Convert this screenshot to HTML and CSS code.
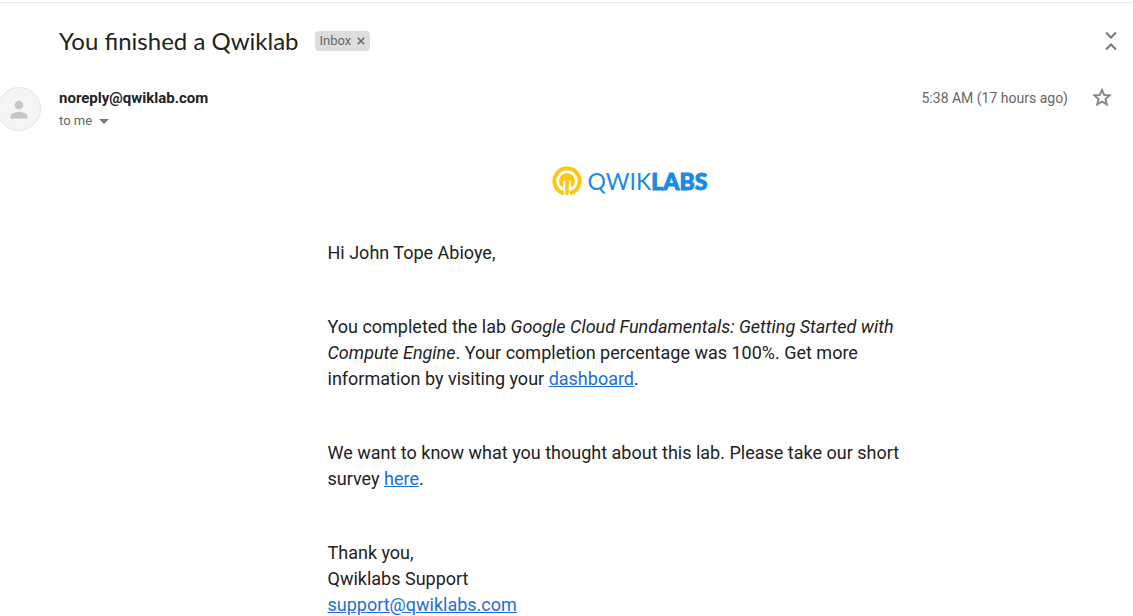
FILE: index.html
```html
<!DOCTYPE html>
<html lang="en">
<head>
<meta charset="utf-8">
<title>You finished a Qwiklab</title>
<link rel="stylesheet" href="styles.css">
</head>
<body>
<main class="thread">
  <header class="subject">
    <h1 class="subject-title">You finished a Qwiklab</h1>
    <span class="label">Inbox
      <button class="label-remove" type="button" aria-label="Remove label Inbox">
        <svg width="8" height="8" viewBox="0 0 8 8"><path d="M.7.7l6.600 6.600M7.300.7L.7 7.300" stroke="#666" stroke-width="1.500"/></svg>
      </button>
    </span>
    <button class="collapse" type="button" aria-label="Collapse all">
      <svg width="12" height="20" viewBox="0 0 12 20"><path d="M1 1.500l5 5 5-5M1 18.500l5-5 5 5" fill="none" stroke="#777" stroke-width="2"/></svg>
    </button>
  </header>
  <section class="sender">
    <svg class="avatar" width="44" height="44" viewBox="0 0 44 44" aria-hidden="true">
      <circle cx="22" cy="22" r="21.500" fill="#f5f5f5" stroke="#e4e4e4"/>
      <circle cx="22" cy="18" r="4.300" fill="#c6c6c6"/>
      <path d="M13.500 31.500v-2.200c0-3 5.700-4.500 8.500-4.500s8.500 1.500 8.500 4.500v2.200z" fill="#c6c6c6"/>
    </svg>
    <div class="sender-info">
      <strong class="sender-address">noreply@qwiklab.com</strong>
      <button class="recipients" type="button">to me
        <svg width="10" height="5" viewBox="0 0 10 5"><path d="M0 0h10L5 5z" fill="#777"/></svg>
      </button>
    </div>
    <time class="date">5:38 AM (17 hours ago)</time>
    <button class="star" type="button" aria-label="Star">
      <svg width="20" height="20" viewBox="2 1 20 21"><path fill="#808080" stroke="#808080" stroke-width=".4" d="M22 9.240l-7.190-.62L12 2 9.190 8.630 2 9.240l5.460 4.730L5.820 21 12 17.270 18.180 21l-1.630-7.030L22 9.240zM12 15.400l-3.760 2.270 1-4.280-3.320-2.880 4.380-.38L12 6.100l1.710 4.040 4.380.38-3.320 2.880 1 4.280L12 15.400z"/></svg>
    </button>
  </section>
  <article class="message">
    <div class="logo">
      <svg width="30" height="30" viewBox="0 0 30 30" aria-hidden="true">
        <path d="M12 27.200A12.600 12.600 0 1 1 18 27.200" fill="none" stroke="#fbc816" stroke-width="4"/>
        <path d="M10.200 21.400A8 8 0 1 1 19.800 21.400L18.800 20v-5.200h-2v12.700a1.800 1.800 0 0 1-3.600 0V14.800h-2V20z" fill="#fbc816"/>
      </svg>
      <span class="logo-text">QWIK<b>LABS</b></span>
    </div>
    <p>Hi John Tope Abioye,</p>
    <p>You completed the lab <em>Google Cloud Fundamentals: Getting Started with Compute Engine</em>. Your completion percentage was 100%. Get more information by visiting your <a href="#">dashboard</a>.</p>
    <p>We want to know what you thought about this lab. Please take our short survey <a href="#">here</a>.</p>
    <p>Thank you,<br>Qwiklabs Support<br><a href="mailto:support@qwiklabs.com">support@qwiklabs.com</a></p>
  </article>
</main>
</body>
</html>
```
FILE: styles.css
```css
* { box-sizing: border-box; }
body {
  margin: 0;
  background: #fff;
  color: #222;
  font-family: Roboto, "Liberation Sans", sans-serif;
}
button {
  padding: 0;
  border: 0;
  background: none;
  color: inherit;
  font: inherit;
}
svg { display: block; }
.thread {
  padding-top: 2px;
}
.subject {
  display: flex;
  align-items: center;
  border-top: 1px solid #e8e8e8;
  padding: 22px 16px 0 59px;
}
.subject-title {
  margin: 0;
  font-family: Lato, sans-serif;
  font-size: 24px;
  line-height: 32px;
  font-weight: 400;
}
.label {
  display: flex;
  align-items: center;
  gap: 6px;
  margin-left: 16px;
  padding: 0 5px;
  border-radius: 4px;
  background: #ddd;
  color: #666;
  font-size: 13px;
  line-height: 20px;
}
.collapse { margin-left: auto; }
.sender {
  display: flex;
  align-items: flex-start;
  margin-left: -3px;
  padding: 30px 21px 0 0;
}
.avatar { flex: none; }
.sender-info {
  display: flex;
  flex-direction: column;
  align-items: flex-start;
  margin-left: 18px;
}
.sender-address {
  font-size: 15px;
  line-height: 22px;
}
.recipients {
  display: flex;
  align-items: center;
  gap: 7px;
  color: #666;
  font-size: 13px;
  line-height: 24px;
}
.date {
  margin-left: auto;
  color: #666;
  font-size: 14px;
  line-height: 22px;
}
.star { margin-left: 24px; }
.message {
  max-width: 604px;
  margin: 33px auto 0 calc(50% - 239px);
  font-size: 18px;
  line-height: 26px;
}
.message p { margin: 0 0 48px; }
.message p:last-child { margin-bottom: 0; }
.logo {
  display: flex;
  align-items: center;
  justify-content: center;
  gap: 6px;
  margin-bottom: 44px;
}
.logo-text {
  color: #1a8be2;
  font-family: Lato, sans-serif;
  font-size: 23px;
  line-height: 30px;
  font-weight: 400;
}
.logo-text b {
  font-weight: 900;
  -webkit-text-stroke: 1px currentColor;
}
a { color: #1a6fd6; }
```
